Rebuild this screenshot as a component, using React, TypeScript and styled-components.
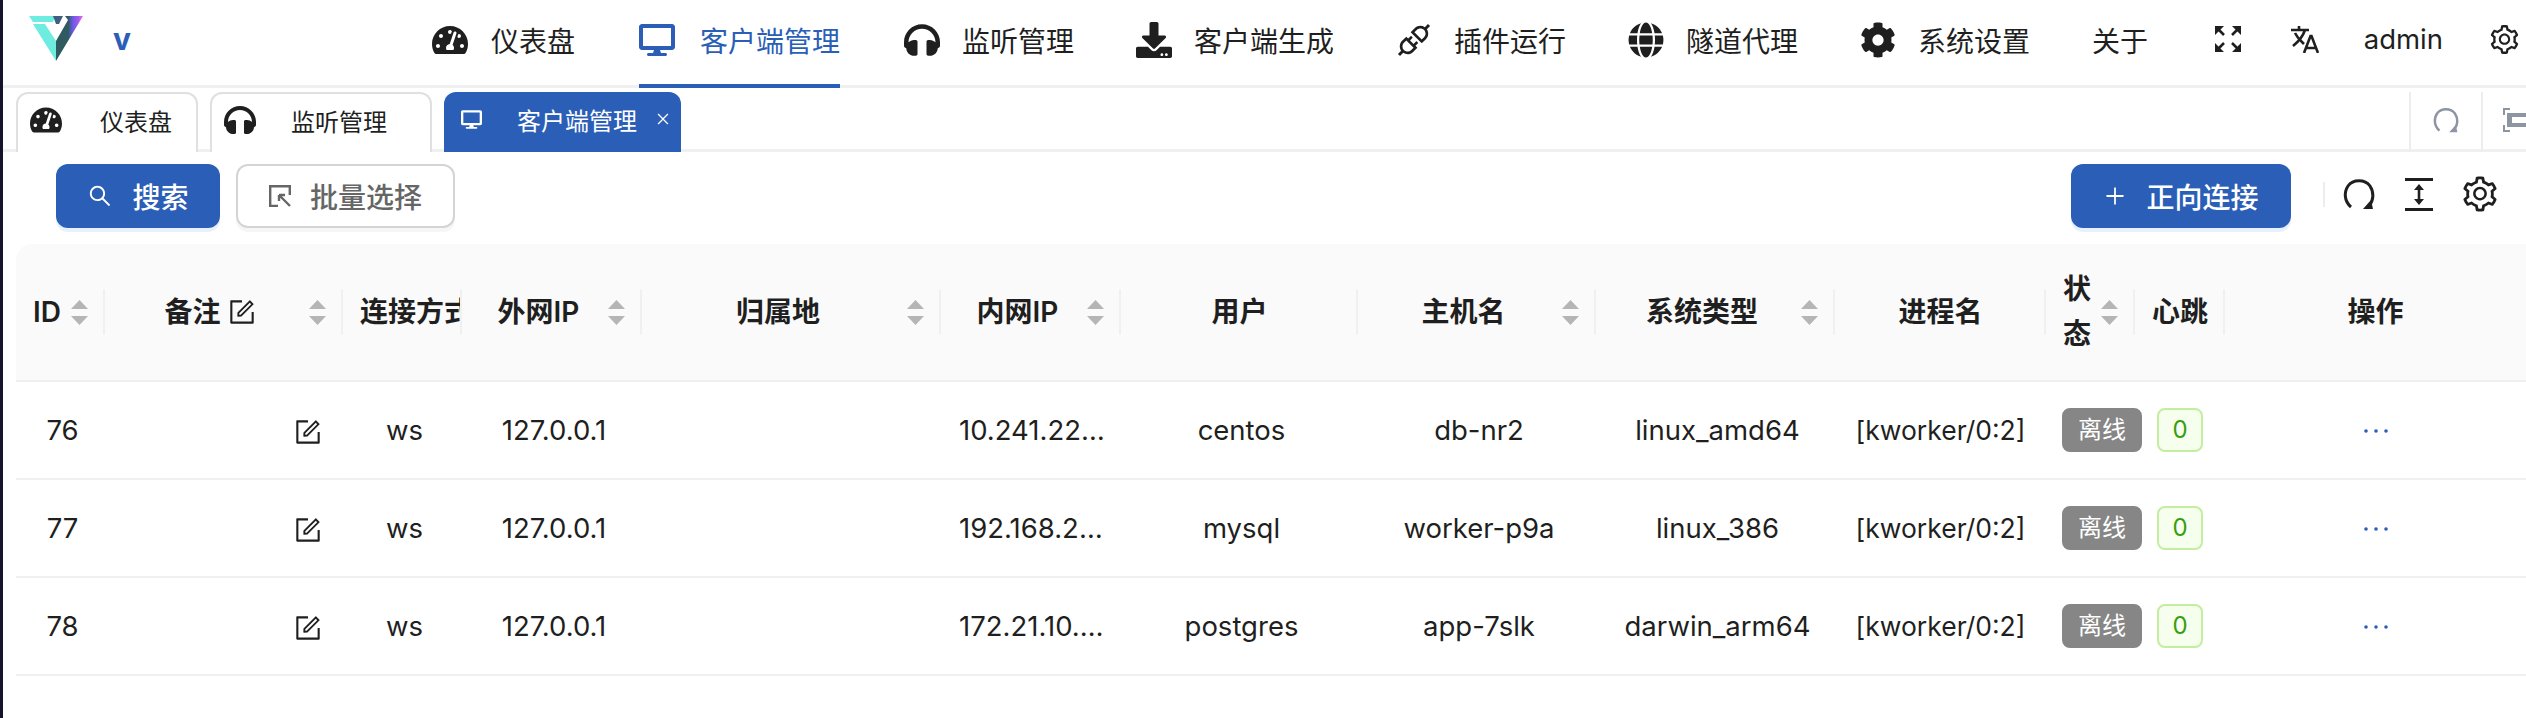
import React from "react";
import styled, { createGlobalStyle } from "styled-components";
import { FaTachometerAlt, FaDesktop, FaHeadphones, FaDownload, FaGlobe, FaCog } from "react-icons/fa";
import { AiOutlineApi, AiOutlineSetting, AiOutlineForm, AiOutlineSearch, AiOutlinePlus, AiOutlineClose } from "react-icons/ai";

const PRIMARY = "#2a5eb7";
const FONT = `Inter, "Noto Sans CJK SC", sans-serif`;

const Global = createGlobalStyle`
  html, body { margin: 0; padding: 0; background: #fff; }
  body { font-family: ${FONT}; color: #1f1f1f; width: 2526px; height: 718px; overflow: hidden; }
  * { box-sizing: border-box; }
`;

const Page = styled.div`
  width: 2526px;
  height: 718px;
  border-left: 3px solid #14142a;
  background: #fff;
  overflow: hidden;
`;

const Header = styled.header`
  height: 88px;
  display: flex;
  align-items: stretch;
  border-bottom: 3px solid #f0f0f0;
`;

const Brand = styled.div`
  width: 397px;
  flex: none;
  display: flex;
  align-items: center;
  padding-left: 26px;
  padding-bottom: 8px;
`;

const BrandName = styled.span`
  margin-left: 30px;
  font-size: 30px;
  font-weight: 700;
  color: ${PRIMARY};
`;

const Nav = styled.nav`
  display: flex;
  flex: 1;
  align-items: stretch;
`;

const NavItem = styled.div<{ $active?: boolean; $gap: number; $pr: number }>`
  padding: 0 ${(p) => p.$pr}px 8px 32px;
  margin-bottom: -3px;
  height: 88px;
  display: flex;
  align-items: center;
  gap: ${(p) => p.$gap}px;
  font-size: 28px;
  color: ${(p) => (p.$active ? PRIMARY : "#1f1f1f")};
  white-space: nowrap;
  position: relative;
  &::after {
    content: "";
    display: ${(p) => (p.$active ? "block" : "none")};
    position: absolute;
    left: 32px;
    right: 32px;
    bottom: 0;
    height: 4px;
    background: ${PRIMARY};
  }
  svg { height: 36px; width: auto; flex: none; }
`;

const PlugIcon = styled(AiOutlineApi)`
  && { width: 40px; height: 40px; margin: -2px; }
`;

const HeaderTools = styled.div`
  display: flex;
  align-items: center;
  padding: 0 5px 7px 0;
  color: #1f1f1f;
  font-size: 27.5px;
  svg { flex: none; }
`;

const ToolSlot = styled.span<{ $ml: number }>`
  margin-left: ${(p) => p.$ml}px;
  display: flex;
  align-items: center;
`;

const TabsBar = styled.div`
  height: 64px;
  display: flex;
  align-items: flex-end;
  border-bottom: 3px solid #f0f0f0;
  padding-left: 13px;
  gap: 12px;
`;

const Tab = styled.div<{ $active?: boolean; $w: number }>`
  width: ${(p) => p.$w}px;
  height: 60px;
  margin-bottom: -3px;
  border: ${(p) => (p.$active ? "none" : "2px solid #e0e0e0")};
  border-bottom: none;
  border-radius: 12px 12px 0 0;
  background: ${(p) => (p.$active ? PRIMARY : "#fff")};
  color: ${(p) => (p.$active ? "#fff" : "#1f1f1f")};
  display: flex;
  align-items: center;
  padding: 0 0 6px ${(p) => (p.$active ? 17 : 12)}px;
  font-size: 24px;
  svg { flex: none; height: ${(p) => (p.$active ? 21 : 32)}px; width: auto; }
`;

const TabLabel = styled.span<{ $gap: number }>`
  margin-left: ${(p) => p.$gap}px;
`;

const TabClose = styled(AiOutlineClose)`
  margin-left: 18px;
  && { width: 16px; height: 16px; }
`;

const TabSpacer = styled.div`
  flex: 1;
`;

const TabAction = styled.div<{ $w: number; $pad: number }>`
  width: ${(p) => p.$w}px;
  flex: none;
  height: 60px;
  margin-bottom: -3px;
  margin-left: ${(p) => (p.$pad === 22 ? 0 : -12)}px;
  border-left: 2px solid #ededed;
  color: #8d95a3;
  display: flex;
  align-items: center;
  padding: 0 0 4px ${(p) => p.$pad}px;
  overflow: hidden;
  svg { flex: none; }
`;

const Toolbar = styled.div`
  height: 92px;
  display: flex;
  align-items: flex-start;
  padding: 12px 26px 0 53px;
  gap: 16px;
`;

const Button = styled.button<{ $primary?: boolean; $w: number }>`
  width: ${(p) => p.$w}px;
  height: 64px;
  border-radius: 12px;
  border: ${(p) => (p.$primary ? "none" : "2px solid #d4d4d4")};
  background: ${(p) => (p.$primary ? PRIMARY : "#fff")};
  color: ${(p) => (p.$primary ? "#fff" : "#666666")};
  box-shadow: 0 4px 0 ${(p) => (p.$primary ? "#e8f1fb" : "#f6f6f6")};
  font: 500 28px ${FONT};
  display: flex;
  align-items: center;
  justify-content: center;
  gap: 19px;
  padding: 0;
  svg { flex: none; }
`;

const Grow = styled.div`
  flex: 1;
`;

const Divider = styled.div`
  width: 2px;
  height: 25px;
  margin: 18px 2px 0 16px;
  background: #ededed;
`;

const ToolButtons = styled.div`
  display: flex;
  align-items: center;
  height: 44px;
  margin-top: 8px;
  color: #1f1f1f;
  svg { flex: none; }
`;

const HeightSlot = styled.span`
  display: flex;
  margin: 0 27px 0 30px;
`;

const TableWrap = styled.div`
  padding-left: 13px;
`;

const Table = styled.table`
  width: 2510px;
  table-layout: fixed;
  border-collapse: separate;
  border-spacing: 0;
  font-size: 27.5px;
`;

const Th = styled.th`
  height: 138px;
  background: #fafafa;
  font-weight: 600;
  font-size: 28px;
  color: #1f1f1f;
  padding: 0 17px;
  border-bottom: 2px solid #f0f0f0;
  position: relative;
  overflow: hidden;
  &:first-child { border-top-left-radius: 16px; }
  &:not(:last-child)::before {
    content: "";
    position: absolute;
    right: 0;
    top: 50%;
    transform: translateY(-50%);
    width: 2px;
    height: 45px;
    background: #f0f0f0;
  }
`;

const ThInner = styled.div`
  display: flex;
  align-items: center;
`;

const ThTitle = styled.div<{ $left?: boolean; $nowrap?: boolean }>`
  flex: 1;
  min-width: 0;
  text-align: ${(p) => (p.$left ? "left" : "center")};
  white-space: ${(p) => (p.$nowrap ? "nowrap" : "normal")};
  line-height: 45px;
`;

const HeadEdit = styled(AiOutlineForm)`
  width: 30px;
  height: 30px;
  margin-left: 6px;
  vertical-align: -5px;
`;

const Sorter = styled.svg`
  width: 17px;
  height: 25px;
  flex: none;
  margin-left: 10px;
  fill: #b5b5b5;
`;

const Td = styled.td<{ $align?: string; $flush?: boolean }>`
  height: 98px;
  text-align: ${(p) => p.$align || "center"};
  padding: ${(p) => (p.$flush ? "0" : "0 14px 0 18px")};
  border-bottom: 2px solid #f0f0f0;
  color: #1f1f1f;
  white-space: nowrap;
`;

const EditCell = styled(Td)`
  padding: 0 20px 0 0;
`;

const TagCell = styled(Td)`
  padding: 0 16px;
`;

const ProcessName = styled.span`
  font-size: 26.5px;
`;

const Ellipsis = styled.div`
  overflow: hidden;
  text-overflow: ellipsis;
`;

const TagsCell = styled.div<{ $center?: boolean }>`
  display: flex;
  justify-content: ${(p) => (p.$center ? "center" : "flex-start")};
`;

const Tag = styled.span<{ $kind: "gray" | "green" }>`
  height: 44px;
  line-height: 40px;
  font-size: 24px;
  border-radius: 8px;
  flex: none;
  padding: 0 ${(p) => (p.$kind === "gray" ? 14 : 13)}px;
  color: ${(p) => (p.$kind === "gray" ? "#fff" : "#389e0d")};
  background: ${(p) => (p.$kind === "gray" ? "#868686" : "#f6ffed")};
  border: 2px solid ${(p) => (p.$kind === "gray" ? "#868686" : "#c4ee9f")};
`;

const EditBtn = styled(AiOutlineForm)`
  width: 30px;
  height: 30px;
  vertical-align: middle;
`;

const Dots = styled.svg`
  width: 24px;
  height: 6px;
  fill: ${PRIMARY};
  vertical-align: 6px;
`;

const Sort = () => (
  <Sorter viewBox="0 0 17 25">
    <path d="M8.5 0 L17 9 H0 Z M0 16 H17 L8.5 25 Z" />
  </Sorter>
);

const Logo = () => (
  <svg width="54" height="46" viewBox="0 0 54 46">
    <defs>
      <linearGradient id="lg" x1="0.45" y1="0" x2="1" y2="0">
        <stop offset="0" stopColor="#2f5a60" />
        <stop offset="0.3" stopColor="#6a5ae0" />
        <stop offset="0.7" stopColor="#a45cf0" />
        <stop offset="1" stopColor="#ee6cf0" />
      </linearGradient>
    </defs>
    <path d="M0 0 H26 L24 6 H4 Z" fill="#6eecdf" />
    <path d="M4 8 H16 L27 25 V45 Z" fill="#6eecdf" />
    <path d="M24 0 H34 L30 8 H27 Z" fill="#3f5f80" />
    <path d="M27 45 V25 L39 4 L36 0 H54 Z" fill="url(#lg)" />
  </svg>
);

const Reload = ({ size }: { size: number }) => (
  <svg width={size} height={size} viewBox="0 0 32 32" fill="none" stroke="currentColor" strokeWidth="3">
    <path d="M8 29 C1 23 1 14 5 8 C10 1 22 1 27 8 C31 14 31 22 26 28" />
    <path d="M20 31 L28 22 L30 31 Z" fill="currentColor" stroke="none" />
  </svg>
);

const Fullscreen = () => (
  <svg width="28" height="28" viewBox="0 0 28 28" fill="currentColor" stroke="none">
    <path d="M1 1 H10 L1 10 Z M27 1 V10 L18 1 Z M1 27 V18 L10 27 Z M27 27 H18 L27 18 Z" />
    <path d="M3 3 L10 10 M25 3 L18 10 M3 25 L10 18 M25 25 L18 18" stroke="currentColor" strokeWidth="2.6" />
  </svg>
);

const Translate = () => (
  <svg width="28" height="27" viewBox="0 0 28 27" fill="none" stroke="currentColor" strokeWidth="2.6">
    <path d="M0 4 H18 M8 0 V4 M14 4 C12 10 7 16 2 20 M4 7 C7 13 10 15 13 18" />
    <path d="M13 27 L19.5 10 H20.5 L27 27 M15 22 H25" />
  </svg>
);

const MaxIcon = () => (
  <svg width="32" height="24" viewBox="0 0 32 24" fill="#8d95a3">
    <path d="M0 0 H7 V2 H2 V7 H0 Z M25 0 H32 V7 H30 V2 H25 Z M0 17 H2 V22 H7 V24 H0 Z M30 17 H32 V24 H25 V22 H30 Z" />
    <path fillRule="evenodd" d="M4 5 H28 V19 H4 Z M9 9 V15 H23 V9 Z" />
  </svg>
);

const HeightIcon = () => (
  <svg width="28" height="33" viewBox="0 0 28 33">
    <path d="M0 0 H28 V3 H0 Z M0 30 H28 V33 H0 Z" fill="currentColor" />
    <path d="M14 6 L19 12 H15.3 V21 H19 L14 27 L9 21 H12.7 V12 H9 Z" fill="currentColor" />
  </svg>
);

const SelectIcon = () => (
  <svg width="22" height="22" viewBox="0 0 22 22" fill="none" stroke="currentColor" strokeWidth="2.4">
    <path d="M9 21 H1.2 V1.2 H20.8 V10" />
    <path d="M21 21 L10 10 M10 10 V16 M10 10 H16" />
  </svg>
);

const navItems = [
  { icon: <FaTachometerAlt />, label: "仪表盘", gap: 23, pr: 32 },
  { icon: <FaDesktop />, label: "客户端管理", active: true, gap: 25, pr: 32 },
  { icon: <FaHeadphones />, label: "监听管理", gap: 22, pr: 30 },
  { icon: <FaDownload />, label: "客户端生成", gap: 22, pr: 30 },
  { icon: <PlugIcon />, label: "插件运行", gap: 22, pr: 30 },
  { icon: <FaGlobe />, label: "隧道代理", gap: 22, pr: 30 },
  { icon: <FaCog />, label: "系统设置", gap: 22, pr: 30 },
];

const cols = [89, 238, 119, 180, 299, 180, 237, 238, 239, 211, 89, 90, 301];

const rows = [
  { id: 76, ip: "10.241.22.115", user: "centos", host: "db-nr2", os: "linux_amd64" },
  { id: 77, ip: "192.168.2.106", user: "mysql", host: "worker-p9a", os: "linux_386" },
  { id: 78, ip: "172.21.10.240", user: "postgres", host: "app-7slk", os: "darwin_arm64" },
];

export default function App() {
  return (
    <>
      <Global />
      <Page>
        <Header>
          <Brand>
            <Logo />
            <BrandName>v</BrandName>
          </Brand>
          <Nav>
            {navItems.map((n) => (
              <NavItem key={n.label} $active={n.active} $gap={n.gap} $pr={n.pr}>
                {n.icon}
                {n.label}
              </NavItem>
            ))}
            <NavItem $gap={0} $pr={32}>关于</NavItem>
          </Nav>
          <HeaderTools>
            <Fullscreen />
            <ToolSlot $ml={49}><Translate /></ToolSlot>
            <ToolSlot $ml={45}>admin</ToolSlot>
            <ToolSlot $ml={45}><AiOutlineSetting size={33} /></ToolSlot>
          </HeaderTools>
        </Header>
        <TabsBar>
          <Tab $w={182}>
            <FaTachometerAlt />
            <TabLabel $gap={38}>仪表盘</TabLabel>
          </Tab>
          <Tab $w={222}>
            <FaHeadphones />
            <TabLabel $gap={35}>监听管理</TabLabel>
          </Tab>
          <Tab $active $w={237}>
            <FaDesktop />
            <TabLabel $gap={35}>客户端管理</TabLabel>
            <TabClose />
          </Tab>
          <TabSpacer />
          <TabAction $w={72} $pad={22}><Reload size={26} /></TabAction>
          <TabAction $w={45} $pad={20}><MaxIcon /></TabAction>
        </TabsBar>
        <Toolbar>
          <Button $primary $w={164}>
            <AiOutlineSearch size={26} />
            搜索
          </Button>
          <Button $w={219}>
            <SelectIcon />
            批量选择
          </Button>
          <Grow />
          <Button $primary $w={220}>
            <AiOutlinePlus size={24} />
            正向连接
          </Button>
          <Divider />
          <ToolButtons>
            <Reload size={32} />
            <HeightSlot><HeightIcon /></HeightSlot>
            <AiOutlineSetting size={40} />
          </ToolButtons>
        </Toolbar>
        <TableWrap>
          <Table>
            <colgroup>
              {cols.map((w, i) => (
                <col key={i} style={{ width: w }} />
              ))}
            </colgroup>
            <thead>
              <tr>
                <Th><ThInner><ThTitle $left $nowrap>ID</ThTitle><Sort /></ThInner></Th>
                <Th><ThInner><ThTitle>备注<HeadEdit /></ThTitle><Sort /></ThInner></Th>
                <Th><ThInner><ThTitle $left $nowrap>连接方式</ThTitle></ThInner></Th>
                <Th><ThInner><ThTitle>外网IP</ThTitle><Sort /></ThInner></Th>
                <Th><ThInner><ThTitle>归属地</ThTitle><Sort /></ThInner></Th>
                <Th><ThInner><ThTitle>内网IP</ThTitle><Sort /></ThInner></Th>
                <Th><ThInner><ThTitle>用户</ThTitle></ThInner></Th>
                <Th><ThInner><ThTitle>主机名</ThTitle><Sort /></ThInner></Th>
                <Th><ThInner><ThTitle>系统类型</ThTitle><Sort /></ThInner></Th>
                <Th><ThInner><ThTitle>进程名</ThTitle></ThInner></Th>
                <Th><ThInner><ThTitle $left>状态</ThTitle><Sort /></ThInner></Th>
                <Th><ThInner><ThTitle $nowrap>心跳</ThTitle></ThInner></Th>
                <Th><ThInner><ThTitle>操作</ThTitle></ThInner></Th>
              </tr>
            </thead>
            <tbody>
              {rows.map((r) => (
                <tr key={r.id}>
                  <Td>{r.id}</Td>
                  <EditCell $align="right"><EditBtn /></EditCell>
                  <Td>ws</Td>
                  <Td>127.0.0.1</Td>
                  <Td />
                  <Td><Ellipsis>{r.ip}</Ellipsis></Td>
                  <Td>{r.user}</Td>
                  <Td>{r.host}</Td>
                  <Td>{r.os}</Td>
                  <Td $flush><ProcessName>[kworker/0:2]</ProcessName></Td>
                  <TagCell><TagsCell><Tag $kind="gray">离线</Tag></TagsCell></TagCell>
                  <TagCell><TagsCell $center><Tag $kind="green">0</Tag></TagsCell></TagCell>
                  <Td $flush>
                    <Dots viewBox="0 0 24 6">
                      <circle cx="2" cy="3" r="1.8" />
                      <circle cx="12" cy="3" r="1.8" />
                      <circle cx="22" cy="3" r="1.8" />
                    </Dots>
                  </Td>
                </tr>
              ))}
            </tbody>
          </Table>
        </TableWrap>
      </Page>
    </>
  );
}
